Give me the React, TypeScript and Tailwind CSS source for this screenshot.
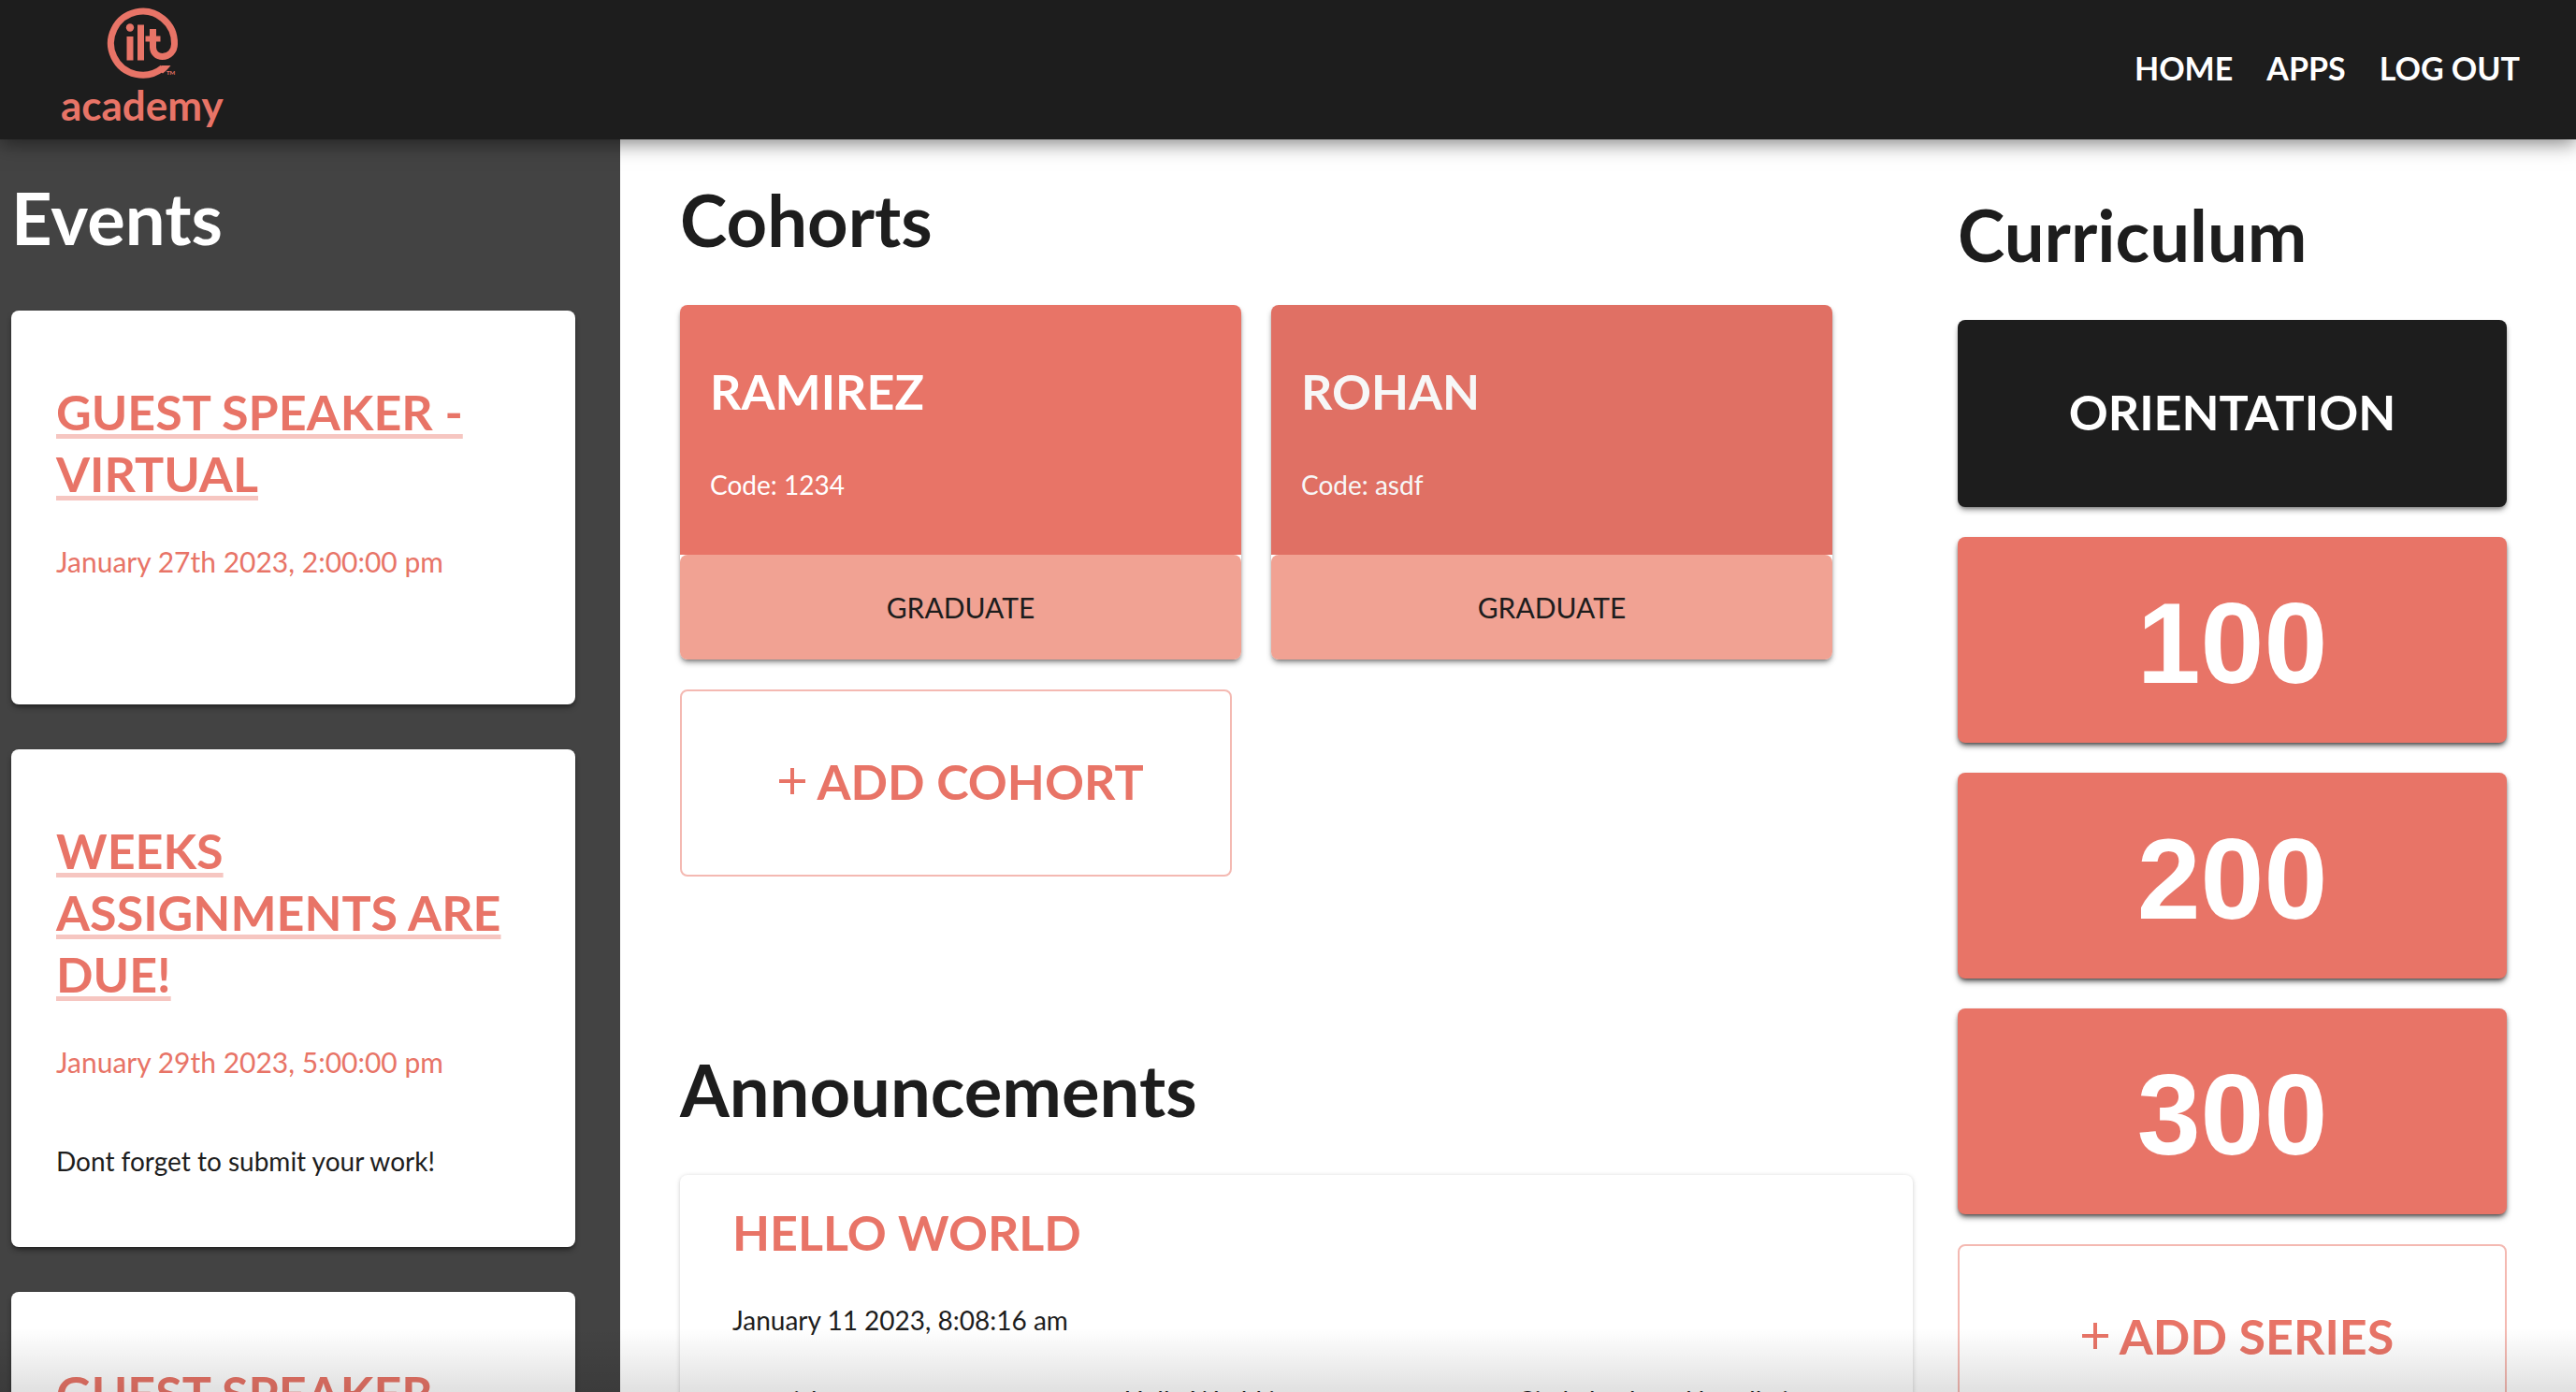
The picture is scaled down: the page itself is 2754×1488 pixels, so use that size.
import type { ReactNode } from "react";

type EventItem = { title: string; date: string; body?: string };

const events: EventItem[] = [
  { title: "GUEST SPEAKER - VIRTUAL", date: "January 27th 2023, 2:00:00 pm" },
  {
    title: "WEEKS ASSIGNMENTS ARE DUE!",
    date: "January 29th 2023, 5:00:00 pm",
    body: "Dont forget to submit your work!",
  },
  { title: "GUEST SPEAKER", date: "February 3rd 2023, 2:00:00 pm" },
];

const series = ["100", "200", "300"];

function Logo() {
  return (
    <a href="#home" aria-label="ilt academy" className="block text-[#e87467]">
      <svg viewBox="0 0 200 148" className="h-[148px] w-[200px]" fill="none" stroke="currentColor">
        <path
          d="M107.500 30V49.500C107.500 55.500 112 59.500 117.500 59.500C125 59.500 130.500 53.500 130.500 46A34 34 0 1 0 118 71.500"
          strokeWidth="7"
        />
        <path d="M117 69H126.500C124 72 121.500 75 118 77.500L112 73Z" fill="currentColor" stroke="none" />
        <path d="M99.500 40.500H115.500" strokeWidth="6" />
        <path d="M83 38V63.500M94.500 25.500V63.500" strokeWidth="7" />
        <circle cx="83" cy="28.500" r="4.200" fill="currentColor" stroke="none" />
        <text x="122" y="79" fontSize="6" fontWeight="700" fill="currentColor" stroke="none" fontFamily="Lato, sans-serif">
          TM
        </text>
        <text x="9" y="128" fontSize="44" fontWeight="700" fill="currentColor" stroke="none" fontFamily="Lato, sans-serif">
          academy
        </text>
      </svg>
    </a>
  );
}

function SectionTitle({ children }: { children: ReactNode }) {
  return <h2 className="text-[76px] leading-[88px] font-bold">{children}</h2>;
}

function EventCard({ title, date, body }: EventItem) {
  return (
    <article className="min-h-[421px] rounded-lg bg-white px-12 pt-[75px] pb-[69px] text-[#e87467] shadow-md shadow-black/40">
      <h3 className="text-[52px] leading-[66px] font-bold">
        <a
          href="#event"
          className="underline decoration-[#f6c6c1] decoration-[5px] underline-offset-4 [text-decoration-skip-ink:none]"
        >
          {title}
        </a>
      </h3>
      <p className="mt-[38px] text-[30px] leading-[46px]">{date}</p>
      {body && <p className="mt-[60px] text-[28px] leading-[46px] text-[#1d1d1d]">{body}</p>}
    </article>
  );
}

function CohortCard({ name, code, active }: { name: string; code: string; active?: boolean }) {
  return (
    <article className="rounded-lg shadow-md shadow-black/40">
      <a
        href="#cohort"
        className={
          active
            ? "block h-[267px] rounded-t-lg bg-[#e07064] px-8 pt-[59px] text-[#f7f7f7]"
            : "block h-[267px] rounded-t-lg bg-[#e87467] px-8 pt-[59px] text-white"
        }
      >
        <h3 className="text-[52px] leading-[66px] font-bold">{name}</h3>
        <p className="mt-[44px] text-[28px] leading-[46px]">Code: {code}</p>
      </a>
      <button type="button" className="block h-28 w-full rounded-lg bg-[#f1a293] text-[30px] text-[#1d1d1d]">
        GRADUATE
      </button>
    </article>
  );
}

function AddButton({ children }: { children: ReactNode }) {
  return (
    <button
      type="button"
      className="flex h-[200px] w-full items-center justify-center gap-3 rounded-lg border-2 border-[#f4b9b2] pb-1 pl-3 text-[52px] font-bold text-[#e87467]"
    >
      <svg viewBox="0 0 28 28" className="size-7" stroke="currentColor" strokeWidth="4" aria-hidden="true">
        <path d="M14 0V28M0 14H28" />
      </svg>
      {children}
    </button>
  );
}

export default function App() {
  return (
    <div className="relative flex h-screen flex-col overflow-hidden bg-white font-[Lato,'Open_Sans',sans-serif] text-[#1d1d1d]">
      <header className="z-10 flex h-[149px] shrink-0 items-center justify-between bg-[#1d1d1d] pr-[60px] pl-14 shadow-[0_4px_20px_rgba(0,0,0,0.5)]">
        <Logo />
        <nav className="flex gap-9 pb-1 text-[34px] font-bold text-white">
          <a href="#home">HOME</a>
          <a href="#apps">APPS</a>
          <a href="#logout">LOG OUT</a>
        </nav>
      </header>

      <div className="flex min-h-0 flex-1">
        <aside className="w-[663px] shrink-0 bg-[#434343] pt-10 pr-12 pl-3">
          <div className="text-white">
            <SectionTitle>Events</SectionTitle>
          </div>
          <div className="mt-[55px] flex flex-col gap-12">
            {events.map((e) => (
              <EventCard key={e.date} {...e} />
            ))}
          </div>
        </aside>

        <main className="min-w-0 flex-1 pt-[42px] pr-12 pl-16">
          <SectionTitle>Cohorts</SectionTitle>
          <div className="mt-[47px] mr-[86px] grid grid-cols-2 gap-8">
            <CohortCard name="RAMIREZ" code="1234" />
            <CohortCard name="ROHAN" code="asdf" active />
            <div className="pr-[10px]">
              <AddButton>ADD COHORT</AddButton>
            </div>
          </div>

          <section className="mt-[184px]">
            <SectionTitle>Announcements</SectionTitle>
            <article className="mt-[47px] h-[400px] rounded-lg px-14 pt-7 shadow-[0_1px_5px_rgba(0,0,0,0.2)]">
              <h3 className="text-[52px] leading-[66px] font-bold text-[#e87467]">HELLO WORLD</h3>
              <p className="mt-[38px] text-[28px] leading-[46px]">January 11 2023, 8:08:16 am</p>
              <p className="mt-10 text-[28px] leading-[46px]">
                we wish to announce some news: Hello World is across our courses. Circle back and handle it.
              </p>
            </article>
          </section>
        </main>

        <aside className="w-[661px] shrink-0 pt-[58px] pr-[74px]">
          <SectionTitle>Curriculum</SectionTitle>
          <div className="mt-[47px] flex flex-col gap-8">
            <a
              href="#orientation"
              className="flex h-[200px] items-center justify-center rounded-lg bg-[#1d1d1d] pb-1 text-[52px] font-bold text-white shadow-md shadow-black/40"
            >
              ORIENTATION
            </a>
            {series.map((s) => (
              <a
                key={s}
                href="#series"
                className="flex h-[220px] items-center justify-center rounded-lg bg-[#e87467] pt-2 font-['Liberation_Sans',sans-serif] text-[122px] leading-none font-bold text-white shadow-md shadow-black/60"
              >
                {s}
              </a>
            ))}
            <AddButton>ADD SERIES</AddButton>
          </div>
        </aside>
      </div>

      <div className="pointer-events-none absolute inset-x-0 bottom-0 h-[68px] bg-linear-to-b from-transparent to-black/12" />
    </div>
  );
}
